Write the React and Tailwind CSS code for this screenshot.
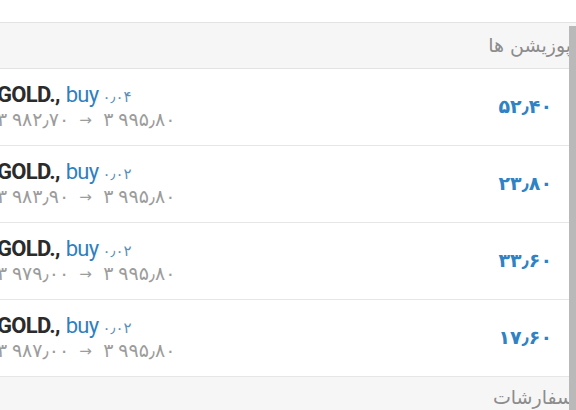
import React from "react";

const rows = [
  { lot: "۰٫۰۴", open: "۳ ۹۸۲٫۷۰", close: "۳ ۹۹۵٫۸۰", profit: "۵۲٫۴۰" },
  { lot: "۰٫۰۲", open: "۳ ۹۸۳٫۹۰", close: "۳ ۹۹۵٫۸۰", profit: "۲۳٫۸۰" },
  { lot: "۰٫۰۲", open: "۳ ۹۷۹٫۰۰", close: "۳ ۹۹۵٫۸۰", profit: "۳۳٫۶۰" },
  { lot: "۰٫۰۲", open: "۳ ۹۸۷٫۰۰", close: "۳ ۹۹۵٫۸۰", profit: "۱۷٫۶۰" },
];

export default function App() {
  return (
    <div
      className="relative w-[576px] h-[410px] overflow-hidden bg-white"
      style={{ fontFamily: "Roboto, 'DejaVu Sans', sans-serif" }}
    >
      <div className="h-[22px] bg-white" />
      <div className="h-[47px] border-y border-[#e3e3e3] bg-[#f6f6f6] flex items-center justify-end overflow-hidden">
        <span dir="rtl" className="text-[19px] text-[#8c8c8c] mr-[5px] font-['DejaVu_Sans',sans-serif]">
          پوزیشن ها
        </span>
      </div>
      {rows.map((r, i) => (
        <div
          key={i}
          className="h-[77px] border-b border-[#e6e6e6] flex items-center justify-between pr-[24px]"
        >
          <div className="flex flex-col ml-[-3px]">
            <div className="flex items-baseline h-[27px] text-[22px] leading-[27px] tracking-[-0.7px]">
              <span className="font-bold text-[#2b2b2b]">GOLD.,</span>
              <span className="ml-[6px] text-[#2f7fbf]">buy</span>
              <span className="ml-[4px] text-[15px] tracking-[0px] text-[#5b8fb8]">{r.lot}</span>
            </div>
            <div className="flex items-center h-[25px] text-[19px] tracking-[1.6px] text-[#9c9c9c]">
              <span>{r.open}</span>
              <span className="mx-[10px] text-[15px]">→</span>
              <span>{r.close}</span>
            </div>
          </div>
          <span className="text-[19px] font-bold text-[#2f82c4] tracking-[0.3px]">{r.profit}</span>
        </div>
      ))}
      <div className="h-[40px] bg-[#f6f6f6] flex items-center justify-end overflow-hidden">
        <span dir="rtl" className="text-[19px] text-[#8c8c8c] mr-[3px] font-['DejaVu_Sans',sans-serif]">
          سفارشات
        </span>
      </div>
      <div className="absolute right-0 top-[26px] bottom-0 w-[7px] bg-[#b9b9b9]" />
    </div>
  );
}
